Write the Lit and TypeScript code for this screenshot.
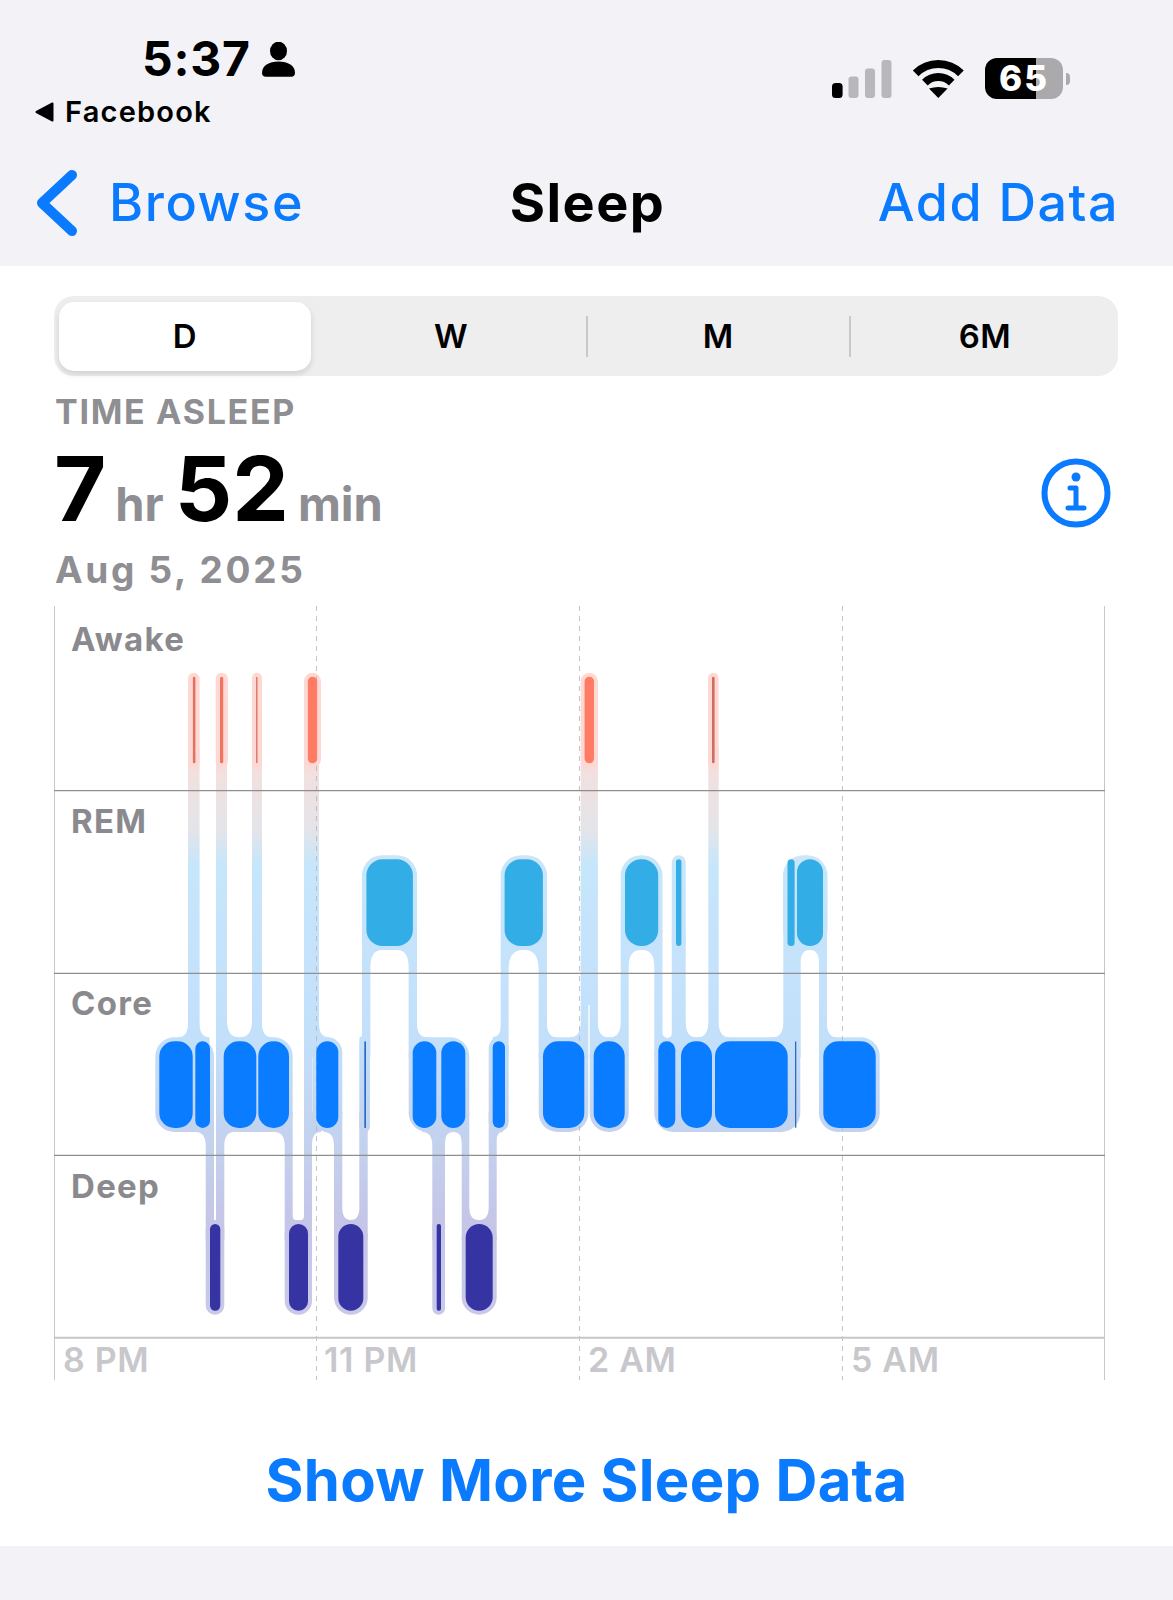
import { LitElement, html, svg, css } from 'lit';
import { customElement } from 'lit/decorators.js';

type Box = [number, number];
// x1, x2, y1, y2, then concave corner radii: top-left, top-right, bottom-left, bottom-right
type Stem = [number, number, number, number, number?, number?, number?, number?];

// row bands in page pixels (the chart svg keeps page coordinates)
const ROWS = {
  awake: { top: 676.7, bottom: 763.3 },
  rem: { top: 859.3, bottom: 946 },
  core: { top: 1041.3, bottom: 1128 },
  deep: { top: 1224, bottom: 1310.7 },
};
const PAD = 4;
const AWAKE_END = ROWS.awake.bottom + PAD;
const REM_TOP = ROWS.rem.top - PAD;
const REM_END = ROWS.rem.bottom + PAD;
const CORE_TOP = ROWS.core.top - PAD;
const CORE_END = ROWS.core.bottom + PAD;
const DEEP_TOP = ROWS.deep.top - PAD;

const AWAKE_HALOS: Box[] = [[188, 199.6], [215.7, 227.9], [252, 262], [304, 321], [580.7, 597.9], [708, 718.6]];
const REM_HALOS: Box[] = [[362, 417], [500.7, 547], [620.7, 662.5], [671.8, 685.7], [783, 827.5]];
const CORE_HALOS: Box[] = [
  [155.3, 214], [216, 292.7], [312.3, 342.3], [359.3, 370], [408.7, 469.3],
  [488.7, 508.7], [538.7, 588.3], [589.7, 628.7], [654.3, 800.3], [819, 879.7],
];
const DEEP_HALOS: Box[] = [[205.7, 224.3], [284.7, 312], [334, 367.7], [432.3, 445], [461.7, 496.7]];

const AWAKE: [number, number, string][] = [
  [192.9, 195.4, '#e4705f'], [220, 223.2, '#f0755f'], [256, 257.5, '#e07a6c'],
  [307.9, 317.1, '#ff7b64'], [584.6, 594, '#ff7b64'], [712, 714.6, '#cf6d60'],
];
const REM: Box[] = [[366.4, 412.9], [504.6, 542.9], [625, 658.2], [676, 681.4], [787.5, 794.6], [797, 823]];
const CORE: Box[] = [
  [159.3, 192.7], [195.3, 210], [223.7, 256.3], [258.3, 289], [316.3, 338.3], [412.7, 436.3],
  [441.3, 465.3], [492.7, 505], [543, 584.3], [593.7, 624.7], [658.3, 675.3], [681, 712],
  [715, 787.7], [823.3, 875.7],
];
const CORE_THIN: Box[] = [[364.3, 366], [795, 796.3]];
const DEEP: Box[] = [[210, 220.3], [289, 308], [338.3, 363.3], [465.7, 492.7]];
const DEEP_THIN: Box[] = [[436.7, 441]];

const STEMS: Stem[] = [
  // awake down to core
  [188, 199.6, AWAKE_END, CORE_TOP, 0, 0, 10, 10],
  [216, 227, AWAKE_END, CORE_TOP, 0, 0, 0, 12],
  [252, 262, AWAKE_END, CORE_TOP, 0, 0, 12, 10],
  [304, 312, AWAKE_END, DEEP_TOP, 0, 0, 3, 0],
  [312, 319, AWAKE_END, CORE_TOP, 0, 0, 0, 10],
  [304, 312, CORE_END, DEEP_TOP, 0, 9],
  [580.7, 597.9, AWAKE_END, 985],
  [580.7, 588.3, 975, CORE_TOP, 0, 0, 11],
  [589.7, 597.9, 975, CORE_TOP, 0, 0, 0, 11],
  [708.3, 718.7, AWAKE_END, CORE_TOP, 0, 0, 11, 11],
  // rem down to core
  [362, 370.4, REM_END, CORE_TOP, 0, 12, 2.5],
  [408.6, 417, REM_END, CORE_TOP, 12, 0, 0, 10],
  [500.7, 508.6, REM_END, CORE_TOP, 0, 14, 8],
  [538.6, 547, REM_END, CORE_TOP, 14, 0, 0, 10],
  [620.7, 628.7, REM_END, CORE_TOP, 0, 12, 11],
  [654.3, 662.5, REM_END, CORE_TOP, 12, 0, 0, 4],
  [671.8, 685.7, REM_END, CORE_TOP, 0, 0, 3, 11],
  [783.3, 800.7, REM_END, CORE_TOP, 0, 9, 11],
  [819, 827, REM_END, CORE_TOP, 9, 0, 0, 10],
  // core down to deep
  [205.7, 214, CORE_END, DEEP_TOP, 10],
  [216, 224.3, CORE_END, DEEP_TOP, 0, 10],
  [284.7, 292.7, CORE_END, DEEP_TOP, 10, 0, 0, 3],
  [334, 342.3, CORE_END, DEEP_TOP, 10, 0, 0, 8.5],
  [359.3, 367.7, CORE_END, DEEP_TOP, 0, 0, 8.5],
  [432.3, 445, CORE_END, DEEP_TOP, 10, 8],
  [461.7, 469.3, CORE_END, DEEP_TOP, 8, 0, 0, 9.5],
  [488.7, 496.7, CORE_END, DEEP_TOP, 0, 6, 9.5],
];

const ROW_LABELS: [string, number][] = [['Awake', 650.7], ['REM', 832.7], ['Core', 1015], ['Deep', 1197.5]];
const HOUR_LABELS: [string, number][] = [['8 PM', 63], ['11 PM', 324], ['2 AM', 588], ['5 AM', 851]];
const TABS = ['D', 'W', 'M', '6M'];

const roundedBar = (b: Box, top: number, bottom: number, maxR: number, fill?: string) => {
  const w = b[1] - b[0];
  return svg`<rect x=${b[0]} y=${top} width=${w} height=${bottom - top} rx=${Math.min(w / 2, maxR)} fill=${fill ?? 'inherit'}></rect>`;
};

const stemPath = ([x1, x2, y1, y2, tl = 0, tr = 0, bl = 0, br = 0]: Stem) => {
  // run 20px into the neighbouring blocks so their round corners get squared off
  const reach = 20;
  const v = 1.4; // the fillets run longer along the stem than across it
  let d = `M${x1} ${y1 - reach}H${x2}V${y2 + reach}H${x1}Z`;
  if (tl) d += `M${x1 - tl} ${y1 - reach}H${x1}V${y1 + tl * v}Q${x1} ${y1} ${x1 - tl} ${y1}Z`;
  if (tr) d += `M${x2 + tr} ${y1 - reach}H${x2}V${y1 + tr * v}Q${x2} ${y1} ${x2 + tr} ${y1}Z`;
  if (bl) d += `M${x1 - bl} ${y2 + reach}H${x1}V${y2 - bl * v}Q${x1} ${y2} ${x1 - bl} ${y2}Z`;
  if (br) d += `M${x2 + br} ${y2 + reach}H${x2}V${y2 - br * v}Q${x2} ${y2} ${x2 + br} ${y2}Z`;
  return d;
};

@customElement('app-root')
export class AppRoot extends LitElement {
  static styles = css`
    :host {
      display: flex;
      flex-direction: column;
      width: 1173px;
      height: 1600px;
      background: #f2f2f7;
      font-family: Inter, 'Liberation Sans', sans-serif;
      color: #000;
    }

    .status {
      display: flex;
      align-items: flex-start;
      height: 130px;
      padding: 34px 103px 0 0;
      box-sizing: border-box;
    }
    .status-left {
      display: flex;
      flex-direction: column;
    }
    .time-row {
      display: flex;
      align-items: center;
      padding-left: 142px;
      height: 50px;
      gap: 11px;
    }
    .time {
      font-size: 48px;
      line-height: 50px;
      font-weight: 700;
      letter-spacing: 0.8px;
    }
    .back-app {
      display: flex;
      align-items: center;
      gap: 11px;
      margin-top: 10.5px;
      padding-left: 35px;
      font-size: 29px;
      line-height: 34px;
      font-weight: 600;
      letter-spacing: 1.2px;
    }
    .status-right {
      display: flex;
      align-items: center;
      margin: 24px 0 0 auto;
      height: 41px;
    }
    .wifi {
      margin: 0 20px;
    }
    .battery {
      display: flex;
      align-items: center;
      gap: 2.5px;
    }
    .battery-body {
      width: 78px;
      height: 41px;
      border-radius: 12px;
      background: linear-gradient(90deg, #000 65%, #aaaaad 65%);
      color: #fff;
      font-size: 35px;
      font-weight: 800;
      line-height: 41px;
      letter-spacing: 2px;
      text-align: center;
    }
    .battery-nub {
      width: 4.5px;
      height: 12px;
      border-radius: 0 6px 6px 0;
      background: #aaaaad;
    }

    .nav {
      display: grid;
      grid-template-columns: 1fr auto 1fr;
      align-items: center;
      height: 136px;
      padding: 43px 54px 33px 32px;
      box-sizing: border-box;
      font-size: 52px;
      line-height: 60px;
    }
    .browse {
      display: flex;
      align-items: center;
      gap: 27px;
      color: #0a7aff;
      font-weight: 550;
      letter-spacing: 1.6px;
    }
    .browse svg {
      margin: -3px 0;
    }
    .title {
      margin-left: 24px;
      font-size: 54px;
      font-weight: 700;
      letter-spacing: 1.4px;
    }
    .add {
      justify-self: end;
      color: #0a7aff;
      font-weight: 550;
      letter-spacing: 1.5px;
    }

    .card {
      display: flex;
      flex-direction: column;
      background: #fff;
      height: 1280px;
      flex: none;
    }
    .segments {
      display: grid;
      grid-template-columns: 259px 2px 265.5px 2px 261.5px 2px 1fr;
      align-items: center;
      height: 80px;
      margin: 30px 55px 0 54px;
      padding: 0 5px;
      box-sizing: border-box;
      background: #eeeeef;
      border-radius: 20px;
      font-size: 33px;
      font-weight: 600;
    }
    .tab-label {
      display: flex;
      align-items: center;
      justify-content: center;
      height: 69px;
      letter-spacing: 0.6px;
    }
    .tab-label.active {
      width: 252px;
      background: #fff;
      border-radius: 15px;
      box-shadow: 0 3px 6px rgba(0, 0, 0, 0.13);
    }
    .tab:nth-child(3) {
      padding-right: 3px;
    }
    .tab:last-child {
      padding-left: 6px;
    }
    .sep {
      height: 41px;
      background: #c9c9cb;
    }
    .sep.hidden {
      background: none;
    }

    .caption {
      margin: 16px 0 0 55px;
      font-size: 34px;
      line-height: 40px;
      font-weight: 700;
      letter-spacing: 1.7px;
      color: #8e8e93;
    }
    .value-row {
      display: flex;
      align-items: baseline;
      height: 90px;
      margin: 12px 62px 0 54px;
    }
    .big {
      font-size: 90px;
      line-height: 90px;
      font-weight: 700;
    }
    .unit {
      font-size: 47px;
      font-weight: 700;
      color: #8e8e93;
      margin: 0 11px 0 9px;
    }
    .info {
      align-self: flex-start;
      margin: 14px 0 0 auto;
    }
    .date {
      margin: 13.6px 0 8.4px 55px;
      font-size: 37px;
      line-height: 44px;
      font-weight: 700;
      letter-spacing: 2.7px;
      color: #8e8e93;
    }
    .chart {
      display: block;
      flex: none;
    }
    .row-label {
      font-size: 33px;
      font-weight: 650;
      letter-spacing: 1.3px;
      fill: #8a8a8e;
    }
    .hour-label {
      font-size: 34px;
      font-weight: 600;
      letter-spacing: 0.7px;
      fill: #c7c7cc;
    }
    .more {
      margin-top: 55px;
      text-align: center;
      font-size: 58px;
      line-height: 70px;
      font-weight: 700;
      letter-spacing: 0.3px;
      color: #0a7aff;
    }
  `;

  private renderStatus() {
    return html`
      <div class="status">
        <div class="status-left">
          <div class="time-row">
            <span class="time">5:37</span>
            <svg width="33" height="35" viewBox="263 42 33 35" fill="#000">
              <ellipse cx="279.5" cy="51" rx="8.5" ry="9.3"></ellipse>
              <path d="M263 73C263 65.500 270 61.500 279.500 61.500S296 65.500 296 73Q296 76.700 292 76.700H267Q263 76.700 263 73Z"></path>
            </svg>
          </div>
          <div class="back-app">
            <svg width="19" height="20" viewBox="0 0 19 20" fill="#000" stroke="#000" stroke-width="2" stroke-linejoin="round">
              <path d="M1.500 10L17.500 1.500V18.500Z"></path>
            </svg>
            <span>Facebook</span>
          </div>
        </div>
        <div class="status-right">
          <svg width="60" height="38" viewBox="0 0 60 38">
            <rect x="0" y="23" width="10.600" height="15" rx="3.500" fill="#000"></rect>
            <rect x="16.500" y="16.500" width="10" height="21.500" rx="3" fill="#b8b8bc"></rect>
            <rect x="33" y="8.500" width="10" height="29.500" rx="3" fill="#b8b8bc"></rect>
            <rect x="49.500" y="0" width="10" height="38" rx="3" fill="#b8b8bc"></rect>
          </svg>
          <svg class="wifi" width="53" height="38" viewBox="0 0 53 38">
            <path d="M3.700 13.400A32 32 0 0 1 48.900 13.400" fill="none" stroke="#000" stroke-width="8"></path>
            <path d="M12.900 22.600A19 19 0 0 1 39.700 22.600" fill="none" stroke="#000" stroke-width="8"></path>
            <path d="M26.300 38L17 28.500Q26.300 25.500 35.600 28.500Z" fill="#000"></path>
          </svg>
          <div class="battery">
            <div class="battery-body">65</div>
            <div class="battery-nub"></div>
          </div>
        </div>
      </div>
    `;
  }

  private renderChart() {
    const dashes = [316.5, 579.5, 842.5];
    const rows = [790.7, 973.3, 1155.3];
    return html`
      <svg class="chart" width="1173" height="790" viewBox="0 600 1173 790">
        <defs>
          <linearGradient id="halo" gradientUnits="userSpaceOnUse" x1="0" y1="672" x2="0" y2="1316">
            <stop offset="0" stop-color="#ffd8d2"></stop>
            <stop offset="0.147" stop-color="#fbd9d5"></stop>
            <stop offset="0.155" stop-color="#f2e0df"></stop>
            <stop offset="0.245" stop-color="#e4e4e9"></stop>
            <stop offset="0.3" stop-color="#c6e6fb"></stop>
            <stop offset="0.56" stop-color="#c3e0fb"></stop>
            <stop offset="0.75" stop-color="#c3d0ec"></stop>
            <stop offset="0.85" stop-color="#c5c5e8"></stop>
            <stop offset="1" stop-color="#c8c8e8"></stop>
          </linearGradient>
        </defs>
        <g fill="url(#halo)">
          ${AWAKE_HALOS.map((b) => roundedBar(b, ROWS.awake.top - PAD, AWAKE_END, 19))}
          ${REM_HALOS.map((b) => roundedBar(b, REM_TOP, REM_END, 20))}
          ${CORE_HALOS.map((b) => roundedBar(b, CORE_TOP, CORE_END, 19))}
          ${DEEP_HALOS.map((b) => roundedBar(b, DEEP_TOP, ROWS.deep.bottom + PAD, 19))}
          <path d=${STEMS.map(stemPath).join('')}></path>
        </g>
        <line class="axis" x1="54.500" x2="54.500" y1="606" y2="1380" stroke="#c8c8c8"></line>
        <line class="axis" x1="1104.500" x2="1104.500" y1="606" y2="1380" stroke="#c8c8c8"></line>
        ${dashes.map(
          (x) => svg`<line x1=${x} x2=${x} y1="606" y2="1380" stroke="#b4b4b8" stroke-opacity="0.8" stroke-dasharray="5 5"></line>`
        )}
        ${rows.map(
          (y) => svg`<line x1="54" x2="1105" y1=${y} y2=${y} stroke="#8f8f8f" stroke-width="1.200"></line>`
        )}
        <line x1="54" x2="1105" y1="1337.700" y2="1337.700" stroke="#c6c6c6" stroke-width="2"></line>
        ${AWAKE.map(([a, b, c]) => roundedBar([a, b], ROWS.awake.top, ROWS.awake.bottom, 8, c))}
        ${REM.map((b) => roundedBar(b, ROWS.rem.top, ROWS.rem.bottom, 16, '#32ade6'))}
        ${CORE.map((b) => roundedBar(b, ROWS.core.top, ROWS.core.bottom, 15, '#0a7cff'))}
        ${CORE_THIN.map((b) => roundedBar(b, ROWS.core.top, ROWS.core.bottom, 1, '#2a6cc8'))}
        ${DEEP.map((b) => roundedBar(b, ROWS.deep.top, ROWS.deep.bottom, 15, '#3634a3'))}
        ${DEEP_THIN.map((b) => roundedBar(b, ROWS.deep.top, ROWS.deep.bottom, 2, '#3634a3'))}
        ${ROW_LABELS.map(([t, y]) => svg`<text class="row-label" x="71" y=${y}>${t}</text>`)}
        ${HOUR_LABELS.map(([t, x]) => svg`<text class="hour-label" x=${x} y="1371.700">${t}</text>`)}
      </svg>
    `;
  }

  render() {
    return html`
      ${this.renderStatus()}
      <div class="nav">
        <div class="browse">
          <svg width="50" height="66" viewBox="32 170 50 66" fill="none" stroke="#0a7aff" stroke-width="10" stroke-linecap="round" stroke-linejoin="round">
            <path d="M72 175L42 203L72 231"></path>
          </svg>
          <span>Browse</span>
        </div>
        <div class="title">Sleep</div>
        <div class="add">Add Data</div>
      </div>
      <div class="card">
        <div class="segments">
          ${TABS.map(
            (t, i) => html`
              ${i > 0 ? html`<div class="sep ${i === 1 ? 'hidden' : ''}"></div>` : ''}
              <div class="tab"><div class="tab-label ${i === 0 ? 'active' : ''}">${t}</div></div>
            `
          )}
        </div>
        <div class="caption">TIME ASLEEP</div>
        <div class="value-row">
          <span class="big">7</span><span class="unit">hr</span>
          <span class="big">52</span><span class="unit">min</span>
          <svg class="info" width="70" height="70" viewBox="0 0 70 70" fill="none" stroke="#0a7aff">
            <circle cx="35" cy="35" r="31.500" stroke-width="6"></circle>
            <circle cx="35" cy="19" r="4.500" fill="#0a7aff" stroke="none"></circle>
            <path d="M29 30H35V50M27 50H43" stroke-width="5" stroke-linecap="round" stroke-linejoin="round"></path>
          </svg>
        </div>
        <div class="date">Aug 5, 2025</div>
        ${this.renderChart()}
        <div class="more">Show More Sleep Data</div>
      </div>
    `;
  }
}
